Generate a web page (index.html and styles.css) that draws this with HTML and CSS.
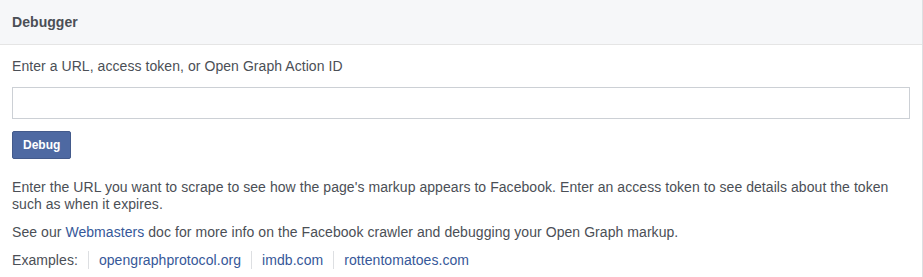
FILE: index.html
```html
<!DOCTYPE html>
<html>
<head>
	<meta charset="utf-8">
	<title>Debugger</title>
	<link rel="stylesheet" href="styles.css">
</head>
<body>

	<div class="panel">
		<div class="panel-header">Debugger</div>
		<div class="panel-body">
			<label class="field-label" for="q">Enter a URL, access token, or Open Graph Action ID</label>
			<input class="text-input" id="q" type="text">
			<div class="actions">
				<button class="btn-debug" type="button">Debug</button>
			</div>
			<p class="help">
				Enter the URL you want to scrape to see how the page's markup appears to Facebook. Enter an access token to see details about the token such as when it expires.
			</p>
			<p class="help">
				See our <a href="#">Webmasters</a> doc for more info on the Facebook crawler and debugging your Open Graph markup.
			</p>
			<div class="examples">
				<span class="examples-label">Examples:</span>
				<a href="#">opengraphprotocol.org</a>
				<a href="#">imdb.com</a>
				<a href="#">rottentomatoes.com</a>
			</div>
		</div>
	</div>

</body>
</html>
```

FILE: styles.css
```css
* {
	box-sizing: border-box;
}
body {
	margin: 0;
	font-family: "Liberation Sans", Arial, sans-serif;
	font-size: 14px;
	line-height: 17px;
	letter-spacing: 0.06px;
	color: #4b4f56;
	background: #fff;
}
a {
	color: #365899;
	text-decoration: none;
}
.panel {
	border-right: solid 1px #dddfe2;
	min-height: 277px;
}
.panel-header {
	height: 45px;
	padding: 0 12px;
	line-height: 44px;
	font-weight: bold;
	background-color: #f6f7f9;
	border-bottom: solid 1px #e5e5e5;
}
.panel-body {
	padding: 12px 12px;
}
.field-label {
	display: block;
	line-height: 18px;
}
.text-input {
	display: block;
	width: 898px;
	height: 32px;
	margin-top: 12px;
	border: solid 1px #ccd0d5;
	font: inherit;
	padding: 0 8px;
}
.actions {
	margin-top: 12px;
	margin-bottom: 20px;
}
.btn-debug {
	height: 28px;
	padding: 0 10px;
	background-color: #4e69a2;
	border: solid 1px #435a8b;
	border-radius: 2px;
	color: #fff;
	font-family: inherit;
	font-size: 12px;
	font-weight: bold;
	vertical-align: top;
}
.help {
	margin: 11px 0 0;
}
.examples {
	display: flex;
	align-items: center;
	margin-top: 10px;
	line-height: 18px;
}
.examples-label {
	padding-right: 10px;
}
.examples a {
	padding: 0 10px;
	border-left: solid 1px #dddfe2;
}
```
